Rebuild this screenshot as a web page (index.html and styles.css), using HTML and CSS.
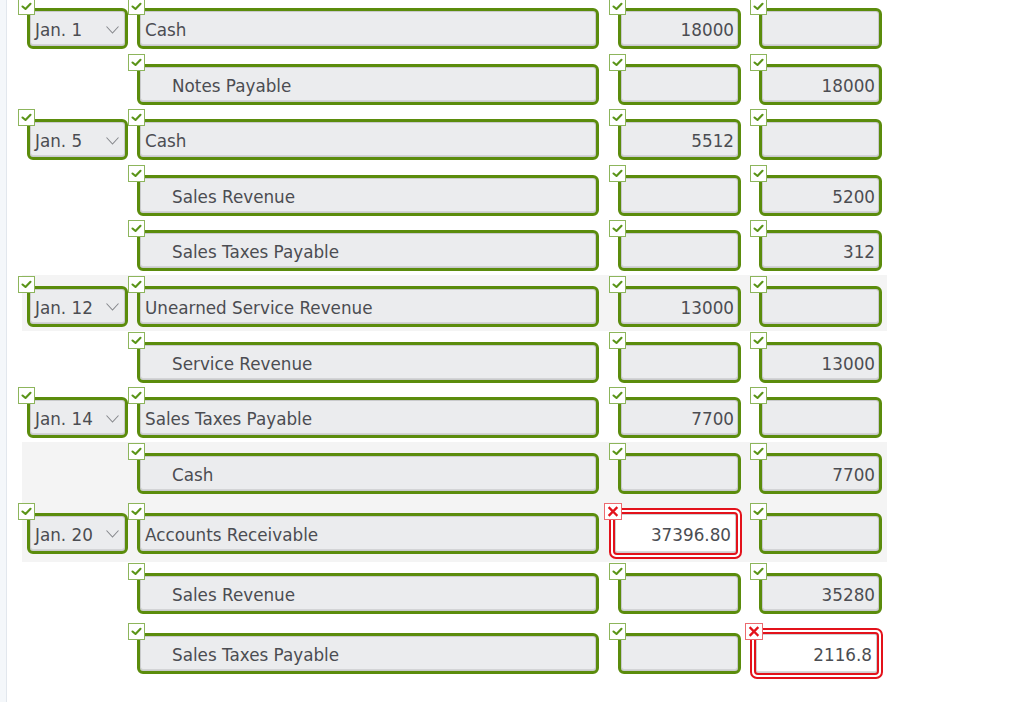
FILE: index.html
```html
<!DOCTYPE html>
<html>
<head>
<meta charset="utf-8">
<link rel="stylesheet" href="styles.css">
</head>
<body>
<div class="page">
  <div class="rail"></div>
  <div class="sheet">

    <div class="row">
      <div class="slot s-date"><div class="field date"><span class="mark ok"><svg viewBox="0 0 15 15"><path d="M3.5 7.5 L6.5 10 L11.5 4.8"/></svg></span><span class="txt">Jan. 1</span><svg class="chev" viewBox="0 0 13 8"><path d="M0.5 0.5 L6.5 7 L12.5 0.5"/></svg></div></div>
      <div class="slot s-acct"><div class="field"><span class="mark ok"><svg viewBox="0 0 15 15"><path d="M3.5 7.5 L6.5 10 L11.5 4.8"/></svg></span><span class="txt">Cash</span></div></div>
      <div class="slot s-dr"><div class="field num"><span class="mark ok"><svg viewBox="0 0 15 15"><path d="M3.5 7.5 L6.5 10 L11.5 4.8"/></svg></span><span class="txt">18000</span></div></div>
      <div class="slot s-cr"><div class="field num"><span class="mark ok"><svg viewBox="0 0 15 15"><path d="M3.5 7.5 L6.5 10 L11.5 4.8"/></svg></span><span class="txt"></span></div></div>
    </div>

    <div class="row">
      <div class="slot s-date"></div>
      <div class="slot s-acct"><div class="field indent"><span class="mark ok"><svg viewBox="0 0 15 15"><path d="M3.5 7.5 L6.5 10 L11.5 4.8"/></svg></span><span class="txt">Notes Payable</span></div></div>
      <div class="slot s-dr"><div class="field num"><span class="mark ok"><svg viewBox="0 0 15 15"><path d="M3.5 7.5 L6.5 10 L11.5 4.8"/></svg></span><span class="txt"></span></div></div>
      <div class="slot s-cr"><div class="field num"><span class="mark ok"><svg viewBox="0 0 15 15"><path d="M3.5 7.5 L6.5 10 L11.5 4.8"/></svg></span><span class="txt">18000</span></div></div>
    </div>

    <div class="row">
      <div class="slot s-date"><div class="field date"><span class="mark ok"><svg viewBox="0 0 15 15"><path d="M3.5 7.5 L6.5 10 L11.5 4.8"/></svg></span><span class="txt">Jan. 5</span><svg class="chev" viewBox="0 0 13 8"><path d="M0.5 0.5 L6.5 7 L12.5 0.5"/></svg></div></div>
      <div class="slot s-acct"><div class="field"><span class="mark ok"><svg viewBox="0 0 15 15"><path d="M3.5 7.5 L6.5 10 L11.5 4.8"/></svg></span><span class="txt">Cash</span></div></div>
      <div class="slot s-dr"><div class="field num"><span class="mark ok"><svg viewBox="0 0 15 15"><path d="M3.5 7.5 L6.5 10 L11.5 4.8"/></svg></span><span class="txt">5512</span></div></div>
      <div class="slot s-cr"><div class="field num"><span class="mark ok"><svg viewBox="0 0 15 15"><path d="M3.5 7.5 L6.5 10 L11.5 4.8"/></svg></span><span class="txt"></span></div></div>
    </div>

    <div class="row">
      <div class="slot s-date"></div>
      <div class="slot s-acct"><div class="field indent"><span class="mark ok"><svg viewBox="0 0 15 15"><path d="M3.5 7.5 L6.5 10 L11.5 4.8"/></svg></span><span class="txt">Sales Revenue</span></div></div>
      <div class="slot s-dr"><div class="field num"><span class="mark ok"><svg viewBox="0 0 15 15"><path d="M3.5 7.5 L6.5 10 L11.5 4.8"/></svg></span><span class="txt"></span></div></div>
      <div class="slot s-cr"><div class="field num"><span class="mark ok"><svg viewBox="0 0 15 15"><path d="M3.5 7.5 L6.5 10 L11.5 4.8"/></svg></span><span class="txt">5200</span></div></div>
    </div>

    <div class="row">
      <div class="slot s-date"></div>
      <div class="slot s-acct"><div class="field indent"><span class="mark ok"><svg viewBox="0 0 15 15"><path d="M3.5 7.5 L6.5 10 L11.5 4.8"/></svg></span><span class="txt">Sales Taxes Payable</span></div></div>
      <div class="slot s-dr"><div class="field num"><span class="mark ok"><svg viewBox="0 0 15 15"><path d="M3.5 7.5 L6.5 10 L11.5 4.8"/></svg></span><span class="txt"></span></div></div>
      <div class="slot s-cr"><div class="field num"><span class="mark ok"><svg viewBox="0 0 15 15"><path d="M3.5 7.5 L6.5 10 L11.5 4.8"/></svg></span><span class="txt">312</span></div></div>
    </div>

    <div class="row shade">
      <div class="slot s-date"><div class="field date"><span class="mark ok"><svg viewBox="0 0 15 15"><path d="M3.5 7.5 L6.5 10 L11.5 4.8"/></svg></span><span class="txt">Jan. 12</span><svg class="chev" viewBox="0 0 13 8"><path d="M0.5 0.5 L6.5 7 L12.5 0.5"/></svg></div></div>
      <div class="slot s-acct"><div class="field"><span class="mark ok"><svg viewBox="0 0 15 15"><path d="M3.5 7.5 L6.5 10 L11.5 4.8"/></svg></span><span class="txt">Unearned Service Revenue</span></div></div>
      <div class="slot s-dr"><div class="field num"><span class="mark ok"><svg viewBox="0 0 15 15"><path d="M3.5 7.5 L6.5 10 L11.5 4.8"/></svg></span><span class="txt">13000</span></div></div>
      <div class="slot s-cr"><div class="field num"><span class="mark ok"><svg viewBox="0 0 15 15"><path d="M3.5 7.5 L6.5 10 L11.5 4.8"/></svg></span><span class="txt"></span></div></div>
    </div>

    <div class="row">
      <div class="slot s-date"></div>
      <div class="slot s-acct"><div class="field indent"><span class="mark ok"><svg viewBox="0 0 15 15"><path d="M3.5 7.5 L6.5 10 L11.5 4.8"/></svg></span><span class="txt">Service Revenue</span></div></div>
      <div class="slot s-dr"><div class="field num"><span class="mark ok"><svg viewBox="0 0 15 15"><path d="M3.5 7.5 L6.5 10 L11.5 4.8"/></svg></span><span class="txt"></span></div></div>
      <div class="slot s-cr"><div class="field num"><span class="mark ok"><svg viewBox="0 0 15 15"><path d="M3.5 7.5 L6.5 10 L11.5 4.8"/></svg></span><span class="txt">13000</span></div></div>
    </div>

    <div class="row">
      <div class="slot s-date"><div class="field date"><span class="mark ok"><svg viewBox="0 0 15 15"><path d="M3.5 7.5 L6.5 10 L11.5 4.8"/></svg></span><span class="txt">Jan. 14</span><svg class="chev" viewBox="0 0 13 8"><path d="M0.5 0.5 L6.5 7 L12.5 0.5"/></svg></div></div>
      <div class="slot s-acct"><div class="field"><span class="mark ok"><svg viewBox="0 0 15 15"><path d="M3.5 7.5 L6.5 10 L11.5 4.8"/></svg></span><span class="txt">Sales Taxes Payable</span></div></div>
      <div class="slot s-dr"><div class="field num"><span class="mark ok"><svg viewBox="0 0 15 15"><path d="M3.5 7.5 L6.5 10 L11.5 4.8"/></svg></span><span class="txt">7700</span></div></div>
      <div class="slot s-cr"><div class="field num"><span class="mark ok"><svg viewBox="0 0 15 15"><path d="M3.5 7.5 L6.5 10 L11.5 4.8"/></svg></span><span class="txt"></span></div></div>
    </div>

    <div class="row shade">
      <div class="slot s-date"></div>
      <div class="slot s-acct"><div class="field indent"><span class="mark ok"><svg viewBox="0 0 15 15"><path d="M3.5 7.5 L6.5 10 L11.5 4.8"/></svg></span><span class="txt">Cash</span></div></div>
      <div class="slot s-dr"><div class="field num"><span class="mark ok"><svg viewBox="0 0 15 15"><path d="M3.5 7.5 L6.5 10 L11.5 4.8"/></svg></span><span class="txt"></span></div></div>
      <div class="slot s-cr"><div class="field num"><span class="mark ok"><svg viewBox="0 0 15 15"><path d="M3.5 7.5 L6.5 10 L11.5 4.8"/></svg></span><span class="txt">7700</span></div></div>
    </div>

    <div class="row shade tall">
      <div class="slot s-date"><div class="field date"><span class="mark ok"><svg viewBox="0 0 15 15"><path d="M3.5 7.5 L6.5 10 L11.5 4.8"/></svg></span><span class="txt">Jan. 20</span><svg class="chev" viewBox="0 0 13 8"><path d="M0.5 0.5 L6.5 7 L12.5 0.5"/></svg></div></div>
      <div class="slot s-acct"><div class="field"><span class="mark ok"><svg viewBox="0 0 15 15"><path d="M3.5 7.5 L6.5 10 L11.5 4.8"/></svg></span><span class="txt">Accounts Receivable</span></div></div>
      <div class="slot s-dr"><div class="field err"><span class="mark bad"><svg viewBox="0 0 16 15"><path d="M4.5 4 L11.5 11 M11.5 4 L4.5 11"/></svg></span><div class="in"><span class="txt">37396.80</span></div></div></div>
      <div class="slot s-cr"><div class="field num"><span class="mark ok"><svg viewBox="0 0 15 15"><path d="M3.5 7.5 L6.5 10 L11.5 4.8"/></svg></span><span class="txt"></span></div></div>
    </div>

    <div class="row mid">
      <div class="slot s-date"></div>
      <div class="slot s-acct"><div class="field indent"><span class="mark ok"><svg viewBox="0 0 15 15"><path d="M3.5 7.5 L6.5 10 L11.5 4.8"/></svg></span><span class="txt">Sales Revenue</span></div></div>
      <div class="slot s-dr"><div class="field num"><span class="mark ok"><svg viewBox="0 0 15 15"><path d="M3.5 7.5 L6.5 10 L11.5 4.8"/></svg></span><span class="txt"></span></div></div>
      <div class="slot s-cr"><div class="field num"><span class="mark ok"><svg viewBox="0 0 15 15"><path d="M3.5 7.5 L6.5 10 L11.5 4.8"/></svg></span><span class="txt">35280</span></div></div>
    </div>

    <div class="row mid">
      <div class="slot s-date"></div>
      <div class="slot s-acct"><div class="field indent"><span class="mark ok"><svg viewBox="0 0 15 15"><path d="M3.5 7.5 L6.5 10 L11.5 4.8"/></svg></span><span class="txt">Sales Taxes Payable</span></div></div>
      <div class="slot s-dr"><div class="field num"><span class="mark ok"><svg viewBox="0 0 15 15"><path d="M3.5 7.5 L6.5 10 L11.5 4.8"/></svg></span><span class="txt"></span></div></div>
      <div class="slot s-cr"><div class="field err"><span class="mark bad"><svg viewBox="0 0 16 15"><path d="M4.5 4 L11.5 11 M11.5 4 L4.5 11"/></svg></span><div class="in"><span class="txt">2116.8</span></div></div></div>
    </div>

  </div>
</div>
</body>
</html>
```

FILE: styles.css
```css
* { box-sizing: border-box; }

html, body { margin: 0; background: #ffffff; }

body {
  font-family: "DejaVu Sans", Verdana, sans-serif;
  font-size: 16.8px;
  color: #4b4d52;
  overflow: hidden;
}

.page {
  display: flex;
  min-height: 100vh;
}

.rail {
  flex: none;
  width: 7px;
  background: #f4f7fa;
  border-right: 1px solid #e2e7ed;
}

.sheet {
  padding-left: 15px;
  margin-top: -3px;
}

.row {
  display: flex;
  align-items: flex-start;
  width: 865px;
  height: 55.6px;
  padding: 11px 0 0 5px;
}

.row.shade { background: #f4f4f4; }
.row.tall { height: 64.6px; padding-top: 15.6px; }
.row.mid { height: 60px; }

.slot { flex: none; }
.s-date { width: 101px; }
.s-acct { width: 462px; margin-left: 9px; }
.s-dr { width: 123px; margin-left: 19px; }
.s-cr { width: 123px; margin-left: 18px; }

.field {
  position: relative;
  display: flex;
  align-items: center;
  height: 41px;
  padding: 0 5px;
  border: 3px solid #5b8c0c;
  border-radius: 6px;
  background: #ebecee;
  box-shadow: inset 0 0 0 1px #c9cacc, inset 0 -1px 0 1px #d3d4d6;
  white-space: nowrap;
}

.txt {
  position: relative;
  top: 1.5px;
}

.field.indent { padding-left: 32px; }
.field.num { justify-content: flex-end; padding-right: 4px; }
.field.date { padding-right: 6px; }

.chev {
  margin-left: auto;
  width: 13px;
  height: 8px;
  fill: none;
  stroke: #87898d;
  stroke-width: 1.1;
  position: relative;
  top: 1px;
}

.mark {
  position: absolute;
  left: -12px;
  top: -13px;
  width: 17px;
  height: 17px;
  background: #ffffff;
  border: 1px solid #8db55c;
  display: flex;
}

.mark svg {
  width: 100%;
  height: 100%;
  fill: none;
  stroke-linecap: round;
  stroke-linejoin: round;
}

.mark.ok svg { stroke: #5a9418; stroke-width: 2.1; }

.field.err {
  width: 133px;
  height: 51px;
  margin: -5px 0 0 -9px;
  padding: 2px;
  border: 2px solid #e3121b;
  border-radius: 7px;
  background: #ffffff;
  box-shadow: none;
}

.field.err .in {
  flex: 1;
  height: 100%;
  display: flex;
  align-items: center;
  justify-content: flex-end;
  padding-right: 5px;
  border: 2px solid #e3121b;
  border-radius: 4px;
  background: #ffffff;
  box-shadow: inset 0 0 0 1px #cfd0d2, inset 0 -1px 0 1px #dadbdd;
}

.mark.bad {
  left: -7px;
  top: -7px;
  width: 18px;
  border-color: #ec6a6f;
}

.mark.bad svg { stroke: #e3121b; stroke-width: 2.4; stroke-linecap: square; }
```
